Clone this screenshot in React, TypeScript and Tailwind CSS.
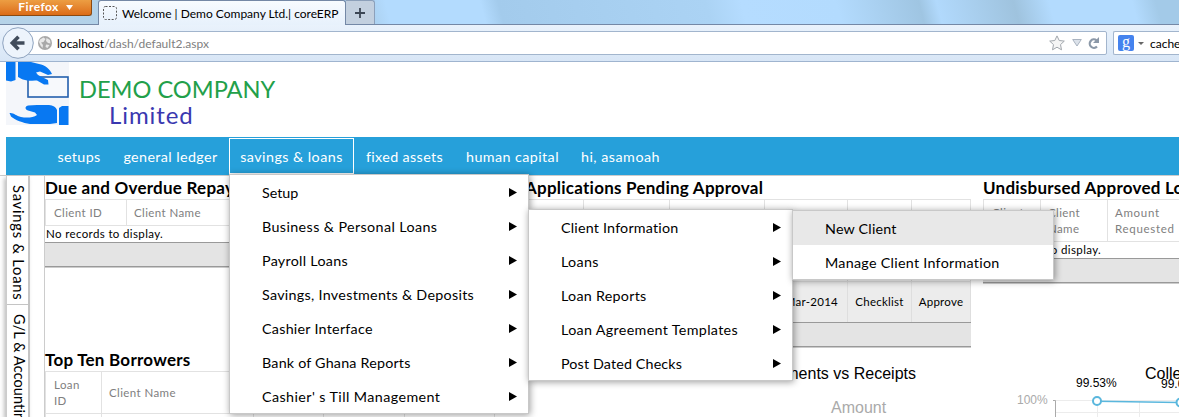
import React from "react";

const navItems = [
  { label: "setups", cls: "w-[66px] tracking-[0.35px]" },
  { label: "general ledger", cls: "w-[117px] tracking-[0.4px]" },
  { label: "savings & loans", cls: "w-[125px] border border-white tracking-[0.45px]" },
  { label: "fixed assets", cls: "w-[101px] tracking-[0.37px]" },
  { label: "human capital", cls: "w-[114px] pl-px tracking-[0.42px]" },
  { label: "hi, asamoah", cls: "w-[102px] pl-px tracking-[0.5px]" },
];

const mainMenu = [
  { label: "Setup", cls: "tracking-[0px]" },
  { label: "Business & Personal Loans", cls: "tracking-[0.39px]" },
  { label: "Payroll Loans", cls: "tracking-[0.28px]" },
  { label: "Savings, Investments & Deposits", cls: "tracking-[0.29px]" },
  { label: "Cashier Interface", cls: "tracking-[0.26px]" },
  { label: "Bank of Ghana Reports", cls: "tracking-[0.2px]" },
  { label: "Cashier' s Till Management", cls: "tracking-[0.41px]" },
];

const loanMenu = [
  { label: "Client Information", cls: "tracking-[0.2px]" },
  { label: "Loans", cls: "tracking-[0.3px]" },
  { label: "Loan Reports", cls: "tracking-[0.26px]" },
  { label: "Loan Agreement Templates", cls: "tracking-[0.33px]" },
  { label: "Post Dated Checks", cls: "tracking-[0.14px]" },
];

type Item = { label: string; cls: string };

function MenuRow({ item, arrow = true, hot = false }: { item: Item; arrow?: boolean; hot?: boolean }) {
  return (
    <div className={`flex h-[34px] items-center justify-between pr-[11px] pl-8 text-[14.3px] text-black ${hot ? "bg-[#e8e8e8]" : ""}`}>
      <span className={`pt-[2px] whitespace-nowrap ${item.cls}`}>{item.label}</span>
      {arrow && (
        <svg className="mt-px h-[9px] w-2" viewBox="0 0 8 9">
          <path d="M0 0L8 4.5L0 9Z" fill="#000" />
        </svg>
      )}
    </div>
  );
}

function TabStrip() {
  return (
    <div className="flex h-[25px] items-end border-b border-[#7488a6] bg-[linear-gradient(75deg,#b6d3e8_0%,#a9cdea_31%,#b3dbfe_33%,#b3dbfe_41%,#a3cbec_42.5%,#abd3f4_60%,#b5dcff_63%,#b3dbfe_71%,#9fc5e2_78%,#b1d9fc_79.5%,#9fc3de_86%,#b3dbfe_89%,#b3dbfe_96%,#a3cae8_98%)]">
      <div className="flex h-[25px] w-[98px] items-start">
        <div className="flex h-[17px] w-[92px] items-center justify-center gap-[7px] rounded-br-[3px] border-r border-b border-[#8a4a12] bg-linear-to-b from-[#eda145] to-[#dc6c16] text-[12px] leading-[14px] font-bold tracking-[0.4px] text-white">
          Firefox
          <svg className="h-[5px] w-[7px]" viewBox="0 0 7 5"><path d="M0 0H7L3.5 5Z" fill="#fff" /></svg>
        </div>
      </div>
      <div className="-mb-px flex h-[25px] w-[248px] items-center rounded-t-[3px] border-x border-t border-[#7488a6] bg-linear-to-b from-[#f7fbff] to-[#e7f1fc] pl-1 text-[12px] text-black">
        <svg className="mr-[5px] h-[14px] w-[14px]" viewBox="0 0 14 14">
          <rect x=".5" y=".5" width="13" height="13" rx="2" fill="none" stroke="#555" strokeDasharray="2 1.5" />
        </svg>
        <span className="pt-px whitespace-nowrap">Welcome | Demo Company Ltd.| coreERP</span>
      </div>
      <div className="flex h-6 w-[29px] items-center justify-center rounded-tr-[3px] border-t border-r border-[#8ca0ba] bg-[#c3d0df]">
        <svg className="h-[10px] w-[10px]" viewBox="0 0 10 10"><path d="M5 0V10M0 5H10" stroke="#3c4654" strokeWidth="1.8" /></svg>
      </div>
    </div>
  );
}

function Toolbar() {
  return (
    <div className="flex h-[37px] items-center border-b border-[#9fb4cf] bg-linear-to-b from-[#e9f2fc] to-[#d8e6f6]">
      <svg className="relative z-10 ml-[2px] h-8 w-8 shrink-0" viewBox="0 0 32 32">
        <circle cx="16" cy="16" r="15.3" fill="#edf4fc" stroke="#8ea3bf" />
        <path d="M16.500 9.700L10.300 16L16.500 22.300M11 16H22.500" fill="none" stroke="#414c5b" strokeWidth="3.6" />
      </svg>
      <div className="-ml-[6px] flex h-6 w-[1079px] shrink-0 items-center rounded-r-[2px] border border-[#a2b5cd] bg-white pr-[6px] pl-[9px] text-[12px]">
        <svg className="mr-[5px] h-[14px] w-[14px]" viewBox="0 0 14 14">
          <circle cx="7" cy="7" r="7" fill="#a9a9a9" />
          <path d="M2 3.5L5.5 1.5L7.5 3L5.5 6L3 6.5L5 9L4.500 12L2.500 9.500L1 6ZM8.500 2L12 4L12.500 7.500L10 7L8 5ZM8 8.500L11.500 9L9.500 12L7.500 11Z" fill="#e9e9e9" />
        </svg>
        <span className="grow pt-px whitespace-nowrap text-[#808080]"><span className="text-black">localhost</span>/dash/default2.aspx</span>
        <svg className="mr-[7px] h-4 w-4" viewBox="0 0 16 16">
          <path d="M8 .9L10.200 5.500L15.300 6.100L11.500 9.600L12.500 14.800L8 12.200L3.500 14.800L4.500 9.600L.7 6.100L5.800 5.500Z" fill="#f5f5f5" stroke="#a2a7ad" />
        </svg>
        <svg className="mr-[6px] h-2 w-[10px]" viewBox="0 0 10 8"><path d="M.7.500H9.300L5 7Z" fill="#dce2ea" stroke="#a9b3c0" /></svg>
        <svg className="h-[13px] w-3" viewBox="0 0 12 13">
          <path d="M9 9.500A4.200 4.200 0 1 1 8.500 3.300" fill="none" stroke="#8b98a8" strokeWidth="2.200" />
          <path d="M11 0V6H5Z" fill="#8b98a8" />
        </svg>
      </div>
      <div className="ml-[6px] flex h-6 grow items-center overflow-hidden rounded-l-[2px] border border-r-0 border-[#a2b5cd] bg-white pl-1 text-[12px]">
        <div className="flex h-4 w-4 shrink-0 items-center justify-center rounded-[2px] bg-[#4583ee] pb-[3px] font-['Liberation_Serif',serif] text-[16px] leading-none text-white">g</div>
        <svg className="mr-[6px] ml-1 h-[3px] w-[6px] shrink-0" viewBox="0 0 6 3"><path d="M0 0H6L3 3Z" fill="#666" /></svg>
        <span className="pt-px whitespace-nowrap">cache</span>
      </div>
    </div>
  );
}

function Logo() {
  return (
    <div className="flex h-[75px] pl-[6px]">
      <svg className="h-[63px] w-[63px]" viewBox="0 0 63 63">
        <rect width="63" height="63" fill="#f4f6fa" />
        <rect x="22" y="15" width="40" height="20" fill="#f7f9fc" stroke="#2460ad" strokeWidth="1.600" />
        <path d="M0 0H9.500V18L5 19.500L0 18.500Z" fill="#0878f2" />
        <path d="M12 0H25L33 2C39 3 44 7 46 12L42 13L34 9.500L30 10.500L32 13L42 18L42.500 22.500L38 22.500L31 18.500C27 18 23 19.500 19 18C16 17.500 14 16 12 15Z" fill="#0878f2" />
        <path d="M3.500 51C8 50.500 10 54 15 55C20 56 27 56 31 53L29 50.500L22 48.500C19 47.500 18.500 44.500 22 43.500L31 43H43C47 43.500 50 45 51 48V61L44 62H24C17 61 9 58 5 54.500Z" fill="#0878f2" />
        <path d="M53 46L56 44H62.500V63H53Z" fill="#0878f2" />
      </svg>
      <div className="ml-[10px] flex flex-col pt-[14px] whitespace-nowrap">
        <span className="text-[23.600px] leading-[26px] text-[#22a04a]">DEMO COMPANY</span>
        <span className="pl-[30px] text-[24px] leading-[26px] tracking-[0.9px] text-[#3a38b0]">Limited</span>
      </div>
    </div>
  );
}

function Footer() {
  return <div className="h-[26px] border-b border-[#ccc] bg-[#e4e4e4]"><div className="h-[25px] border-y border-[#999]" /></div>;
}

const title = "h-[23px] pt-px text-[17px] leading-[22px] font-bold tracking-[0.24px] whitespace-nowrap text-black";
const th = "shrink-0 border-r border-[#e2e2e2] text-[11.500px] tracking-[0.4px] text-[#808080]";

function Overdue() {
  return (
    <section className="h-[172px]">
      <h2 className={title}>Due and Overdue Repayments</h2>
      <div className="flex h-[27px] items-center border border-[#e2e2e2]">
        <div className={`${th} flex h-full w-[81px] items-center pl-2`}>Client ID</div>
        <div className={`${th} flex h-full w-[140px] items-center pl-[7px]`}>Client Name</div>
      </div>
      <div className="h-[16px] pl-px text-[11.500px] leading-[16px] tracking-[0.37px]">No records to display.</div>
      <Footer />
    </section>
  );
}

function Borrowers() {
  return (
    <section>
      <h2 className={title}>Top Ten Borrowers</h2>
      <div className="flex h-[43px] border border-[#e2e2e2]">
        <div className={`${th} w-[56px] pt-[5px] pl-2 leading-[16px]`}>Loan<br />ID</div>
        <div className={`${th} flex w-[152px] items-center pl-[7px]`}>Client Name</div>
        <div className={`${th} w-[70px]`} />
        <div className={`${th} w-[81px]`} />
        <div className={`${th} w-[90px]`} />
      </div>
      <div className="flex h-5 border-l border-[#e2e2e2]">
        <div className={`${th} w-[56px]`} />
        <div className={`${th} w-[152px]`} />
        <div className={`${th} w-[70px]`} />
        <div className={`${th} w-[81px]`} />
        <div className={`${th} w-[90px]`} />
      </div>
    </section>
  );
}

function Pending() {
  return (
    <section className="h-[172px]">
      <h2 className={`${title} pl-[11px]`}>Applications Pending Approval</h2>
      <div className="flex h-[83px] border border-[#e2e2e2]">
        <div className="w-[69px] border-r border-[#e2e2e2]" />
        <div className="w-[86px] border-r border-[#e2e2e2]" />
        <div className="w-[95px] border-r border-[#e2e2e2]" />
        <div className="w-[83px] border-r border-[#e2e2e2]" />
        <div className="w-[64px] border-r border-[#e2e2e2]" />
      </div>
      <div className="flex h-[40px] items-center border-x border-[#dedede] bg-[#ececec] text-[11.500px] tracking-[0.25px] text-black">
        <div className="flex h-full w-[333px] items-center justify-end border-r border-[#dedede] pr-[9px]">31-Mar-2014</div>
        <div className="flex h-full w-[64px] items-center justify-center border-r border-[#dedede]">Checklist</div>
        <div className="flex h-full grow items-center justify-center">Approve</div>
      </div>
      <Footer />
    </section>
  );
}

function Undisbursed() {
  return (
    <section className="h-[172px]">
      <h2 className={title}>Undisbursed Approved Loans</h2>
      <div className="flex h-[43px] border border-[#e2e2e2] leading-[16px]">
        <div className={`${th} w-[57px] pt-[5px] pl-2`}>Client<br />ID</div>
        <div className={`${th} w-[67px] pt-[5px] pl-[7px]`}>Client<br />Name</div>
        <div className={`${th} w-[90px] pt-[5px] pl-[7px] tracking-[0.7px]`}>Amount<br />Requested</div>
      </div>
      <div className="h-[16px] pl-px text-[11.500px] leading-[16px] tracking-[0.37px]">No records to display.</div>
      <Footer />
    </section>
  );
}

function DisbursementChart() {
  return (
    <section className="font-['Liberation_Sans',sans-serif]">
      <h3 className="pt-[17px] pr-[55px] text-right text-[16px] leading-[18px] text-black">Disbursements vs Receipts</h3>
      <div className="pt-[16px] pl-[317px] text-[16px] leading-[18px] text-[#aaa]">Amount</div>
    </section>
  );
}

function CollectionChart() {
  return (
    <section className="w-[196px] overflow-hidden">
      <svg className="h-[69px] w-[196px] font-['Liberation_Sans',sans-serif]" viewBox="983 348 196 69">
        <path d="M1055 400.500H1179M1055 412.500H1179" stroke="#ececec" fill="none" />
        <path d="M1097.500 400V417M1139.500 400V417" stroke="#ececec" fill="none" />
        <path d="M1053 400.500H1055.500V417" stroke="#aaa" fill="none" />
        <path d="M1097 401.200L1180 402.500" stroke="#5ab7dd" strokeWidth="1.400" />
        <circle cx="1097" cy="401" r="4" fill="#fff" stroke="#5ab7dd" strokeWidth="2" />
        <circle cx="1180.500" cy="402.500" r="4" fill="#fff" stroke="#5ab7dd" strokeWidth="2" />
        <text x="1145" y="379" fontSize="16">Collections</text>
        <text x="1076" y="387" fontSize="12">99.53%</text>
        <text x="1161" y="388" fontSize="12">99.03%</text>
        <text x="1017" y="404" fontSize="12" fill="#aaa">100%</text>
      </svg>
    </section>
  );
}

function Sidebar() {
  return (
    <aside className="ml-[6px] flex h-[242px] w-[24px] shrink-0 flex-col border-l border-[#ccc] bg-white shadow-[-2px_2px_4px_rgba(0,0,0,0.25)]">
      <div className="flex h-[129px] items-start justify-center border-r-2 border-b border-[#c4c4c4] pt-[9px] pl-[2px]">
        <span className="text-[14.800px] leading-[18px] tracking-[0.75px] whitespace-nowrap [writing-mode:vertical-rl]">Savings &amp; Loans</span>
      </div>
      <div className="flex h-[113px] items-start justify-center overflow-hidden border-r-2 border-[#c4c4c4] pt-[9px] pl-[2px]">
        <span className="text-[14.500px] leading-[18px] tracking-[0.1px] whitespace-nowrap [writing-mode:vertical-rl]">G/L &amp; Accounting</span>
      </div>
    </aside>
  );
}

const popup = "absolute border border-[#c8c8c8] bg-white shadow-[1px_1px_7px_rgba(0,0,0,0.4)]";

export default function App() {
  return (
    <div className="relative h-[417px] w-[1179px] overflow-hidden bg-white font-['Lato','Noto_Sans',sans-serif]">
      <TabStrip />
      <Toolbar />
      <Logo />
      <nav className="ml-[6px] flex h-[38px] bg-[#26a0da] pt-px pl-10 text-[14.300px] text-white">
        {navItems.map((n) => (
          <div key={n.label} className={`flex h-9 items-center justify-center pt-[2px] whitespace-nowrap ${n.cls}`}>{n.label}</div>
        ))}
      </nav>
      <main className="flex h-[242px] border-t border-[#ccc]">
        <Sidebar />
        <div className="ml-[14px] flex shrink-0 gap-3 border-l border-[#ccc]">
          <div className="w-[457px]"><Overdue /><Borrowers /></div>
          <div className="w-[457px]"><Pending /><DisbursementChart /></div>
          <div className="w-[457px]"><Undisbursed /><CollectionChart /></div>
        </div>
      </main>

      <div className={`${popup} top-[174px] left-[229px] h-[240px] w-[300px]`}>
        {mainMenu.map((m) => <MenuRow key={m.label} item={m} />)}
      </div>
      <div className={`${popup} top-[209px] left-[528px] h-[172px] w-[265px]`}>
        {loanMenu.map((m) => <MenuRow key={m.label} item={m} />)}
      </div>
      <div className={`${popup} top-[210px] left-[792px] h-[70px] w-[262px]`}>
        <MenuRow item={{ label: "New Client", cls: "tracking-[0.2px]" }} arrow={false} hot />
        <MenuRow item={{ label: "Manage Client Information", cls: "tracking-[0.28px]" }} arrow={false} />
      </div>
    </div>
  );
}
